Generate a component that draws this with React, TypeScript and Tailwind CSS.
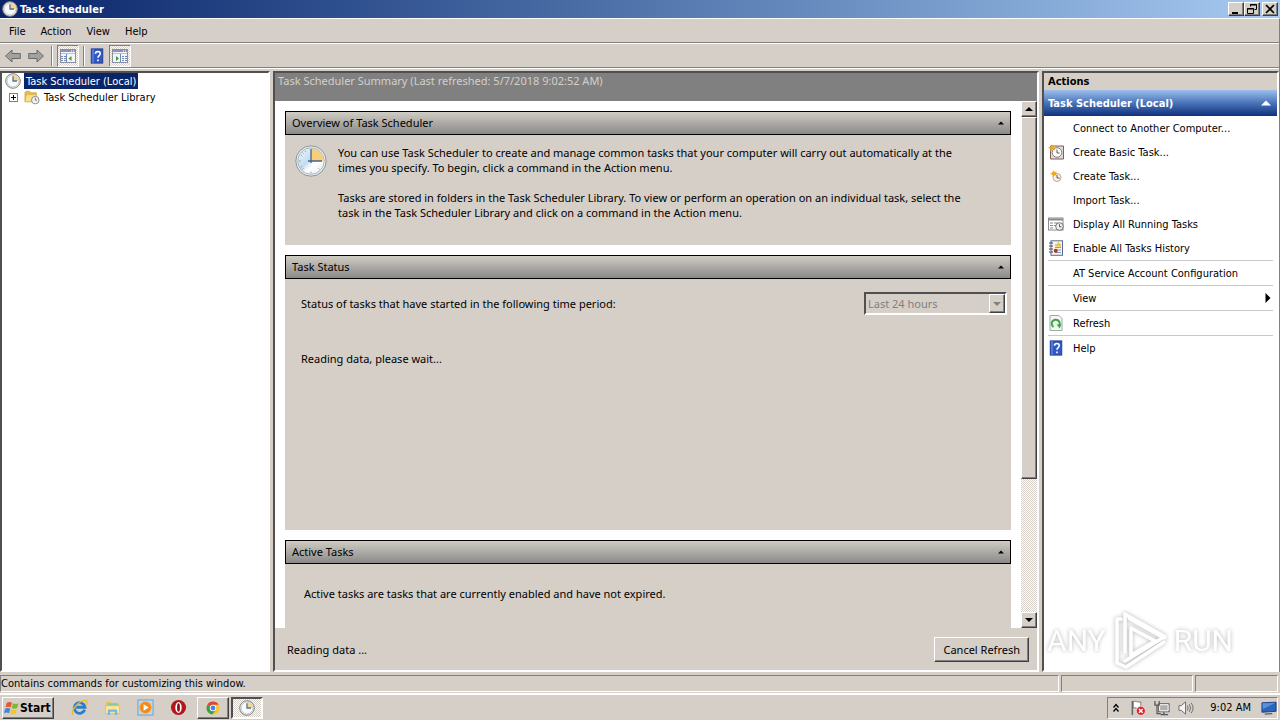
import type { ReactNode } from 'react'
import { clsx } from 'clsx'

const RAISED =
  'border border-t-white border-l-white border-r-[#404040] border-b-[#404040] bg-[#d5cfc8] shadow-[inset_-1px_-1px_0_#808080]'
const SUNKEN = 'border-2 border-t-[#505050] border-l-[#505050] border-r-white border-b-white'
const THIN_SUNKEN = 'border border-t-[#808080] border-l-[#808080] border-r-white border-b-white'
const DITHER = 'bg-[repeating-conic-gradient(#fff_0_25%,#d5cfc8_0_50%)] bg-[length:2px_2px]'

function ClockIcon({ className }: { className?: string }) {
  return (
    <svg viewBox="0 0 16 16" className={clsx('shrink-0', className)}>
      <circle cx="8" cy="8" r="7.3" fill="#e9e9e6" stroke="#86857f" strokeWidth="1" />
      <circle cx="8" cy="8" r="5.8" fill="#f7fafc" stroke="#b9bcc0" strokeWidth=".6" />
      <path d="M8 8V2.4A5.6 5.6 0 0 1 13.6 8Z" fill="#f5d68f" />
      <path d="M8 3.2V8h4" fill="none" stroke="#5b6f8c" strokeWidth="1.3" />
    </svg>
  )
}

function BigClockIcon() {
  return (
    <svg viewBox="0 0 32 32" className="h-8 w-8 shrink-0">
      <defs>
        <linearGradient id="face" x1="0" y1="0" x2="1" y2="1">
          <stop offset="0" stopColor="#f4f9fd" />
          <stop offset=".45" stopColor="#c4dcef" />
          <stop offset=".6" stopColor="#fff" />
          <stop offset="1" stopColor="#e4eef6" />
        </linearGradient>
      </defs>
      <circle cx="16" cy="16" r="15.2" fill="#eceeee" stroke="#8d9296" strokeWidth="1" />
      <circle cx="16" cy="16" r="13.2" fill="url(#face)" stroke="#98a6b2" strokeWidth=".8" />
      <path d="M16 16V3.4A12.6 12.6 0 0 1 28.6 16Z" fill="#f6cf7d" />
      <path
        d="M16 26.5v2M4 16h2M7.5 7.5l1.2 1.2M7.5 24.5l1.2-1.2M24.5 24.5l-1.2-1.2M10 5.8l.8 1.3M5.8 10l1.3.8M5.8 22l1.3-.8"
        stroke="#8fa9c2"
        strokeWidth="1"
      />
      <path d="M16 4v14M13 16h14" stroke="#4a6484" strokeWidth="1.3" />
    </svg>
  )
}

function FolderClockIcon() {
  return (
    <svg viewBox="0 0 17 16" className="h-4 w-4 shrink-0">
      <path d="M1 3.5 2 2h4l1.5 1.5H13V13H1z" fill="#e9bd4e" stroke="#c79a35" strokeWidth=".7" />
      <path d="M1 13 2.5 5.5h11L12.5 13z" fill="#fbe08a" stroke="#d3a842" strokeWidth=".6" />
      <circle cx="12" cy="11.3" r="4" fill="#f4f4f4" stroke="#7d7d7d" strokeWidth=".9" />
      <path d="M12 8.8v2.6h2" fill="none" stroke="#666" strokeWidth=".9" />
    </svg>
  )
}

function HelpIcon() {
  return (
    <svg viewBox="0 0 16 18" className="h-4 w-4 shrink-0">
      <rect x="1.5" y="1" width="13" height="16" fill="#3159c4" stroke="#1d3a93" />
      <path d="M3.5 1v16" stroke="#7d9cec" strokeWidth="1" />
      <path
        d="M6.3 6.5c0-3.4 5.4-3.4 5.4-.2 0 2.3-2.6 2.3-2.6 4.7M9.1 12.8v2"
        fill="none"
        stroke="#fff"
        strokeWidth="1.8"
      />
    </svg>
  )
}

function PaneIcon({ mirrored }: { mirrored?: boolean }) {
  return (
    <svg viewBox="0 0 16 14" className="h-3.5 w-4 shrink-0">
      <rect x=".5" y=".5" width="15" height="13" fill="#f4f5f8" stroke="#8a8fa2" />
      <path d="M1 2h14" stroke="#8794b5" strokeWidth="2" />
      <path d="M1 4.5h14" stroke="#b9c0d4" />
      <path d="M11 2h1M13 2h1" stroke="#fff" />
      <path
        d={
          mirrored
            ? 'M8.500 5v8M10 7.500h2M10 9.500h2M10 11.500h2M13 7.500h2M13 9.500h2M13 11.500h2'
            : 'M6.500 5v8M1 7.500h2M1 9.500h2M1 11.500h2M4 7.500h2M4 9.500h2M4 11.500h2'
        }
        stroke="#7286b4"
      />
      <path d={mirrored ? 'M4 7v5l3-2.500z' : 'M11.500 7v5l-3-2.500z'} fill="#3e9a3e" />
    </svg>
  )
}

function ArrowIcon({ forward }: { forward?: boolean }) {
  return (
    <svg viewBox="0 0 16 14" className="h-4 w-4">
      <path
        d={forward ? 'M15.500 7 9 1v3.500H.7v5H9V13z' : 'M.5 7 7 1v3.500h8.300v5H7V13z'}
        fill="#a3a19e"
        stroke="#6a6a6a"
        strokeWidth="1"
      />
    </svg>
  )
}

function BasicTaskIcon() {
  return (
    <svg viewBox="0 0 16 16" className="h-4 w-4">
      <path d="M2.500 2h13v13h-13z" fill="#e2dcda" stroke="#7a5f5a" />
      <circle cx="9" cy="8.500" r="4.800" fill="#fff" stroke="#8a7a76" />
      <path d="M9 5.500V9h2.600" fill="none" stroke="#5b5b5b" />
      <path d="m4 0 1 2.600L8 2 6 4l1.500 2.400L4.500 5.600 2.500 8l-.2-3L0 3.600l2.700-.8z" fill="#f2a91e" />
    </svg>
  )
}

function CreateTaskIcon() {
  return (
    <svg viewBox="0 0 16 16" className="h-4 w-4">
      <circle cx="9" cy="9.500" r="4" fill="#f4f0ea" stroke="#b9ab9a" />
      <path d="M9 7v3h2.600" fill="none" stroke="#5e5850" />
      <path d="m5.500 2 1 2.200L9 3.600 7.700 5.600l1.300 2-2.600-.4-1.600 2-.4-2.500L2 5.500l2.600-.8z" fill="#f2a91e" />
      <circle cx="5.800" cy="5.400" r="2" fill="#f2a91e" />
    </svg>
  )
}

function RunningTasksIcon() {
  return (
    <svg viewBox="0 0 16 16" className="h-4 w-4">
      <rect x=".5" y="2" width="14.500" height="12" fill="#fff" stroke="#8b8b8b" />
      <path d="M1 3.500h14" stroke="#8b8b8b" strokeWidth="2" />
      <path d="M2 7h3M6 7h4M2 9.500h3M6 9.500h2M2 12h3" stroke="#888" />
      <circle cx="11.500" cy="10.500" r="3.800" fill="#f1f1f1" stroke="#747474" />
      <path d="M11.500 8.200v2.600h2" fill="none" stroke="#555" />
    </svg>
  )
}

function HistoryIcon() {
  return (
    <svg viewBox="0 0 16 16" className="h-4 w-4">
      <rect x="3" y=".8" width="11.500" height="14.500" fill="#f7f4e4" stroke="#596aa0" />
      <path d="M1 3h4M1 6h4M1 9h4M1 12h4" stroke="#48485a" />
      <path d="M7 5h6M7 7.500h6M7 10h6M7 12.500h6" stroke="#8c9ac4" />
      <path d="m10.500 1.500 3 5h-6z" fill="#f0c437" />
      <circle cx="7.700" cy="10.700" r="2" fill="#b5322e" />
    </svg>
  )
}

function RefreshIcon() {
  return (
    <svg viewBox="0 0 16 16" className="h-4 w-4">
      <path d="M2 .5h9l3 3v12H2z" fill="#f2f8f1" stroke="#9cab9b" />
      <path d="M5.500 12A4 4 0 1 1 11 11" fill="none" stroke="#3fa14a" strokeWidth="2" />
      <path d="m8.500 9.500 4.800-.2-1.500 4.300z" fill="#3fa14a" />
    </svg>
  )
}

function Triangle({ dir, className }: { dir: 'up' | 'down' | 'right'; className?: string }) {
  const d = { up: 'M0 6 4 2l4 4z', down: 'M0 2h8L4 6z', right: 'M2 0v8l4-4z' }[dir]
  return (
    <svg viewBox="0 0 8 8" className={clsx('shrink-0', className)}>
      <path d={d} fill="currentColor" />
    </svg>
  )
}

function TitleBar() {
  const button = clsx(RAISED, 'flex h-3.5 w-4 items-center justify-center')
  return (
    <header className="flex h-[18px] shrink-0 items-center bg-linear-to-r from-[#0a246a] to-[#a6caf0] px-0.5 text-white">
      <ClockIcon className="mr-0.5 h-4 w-4" />
      <h1 className="flex-1 font-bold">Task Scheduler</h1>
      <button className={button} aria-label="Minimize">
        <svg viewBox="0 0 12 12" className="h-3 w-3">
          <path d="M2 10h6" stroke="#000" strokeWidth="2" />
        </svg>
      </button>
      <button className={button} aria-label="Restore">
        <svg viewBox="0 0 12 12" className="h-3 w-3" fill="none" stroke="#000">
          <path d="M4.500 3.500v-2h6v5h-2M4 2h7M1.500 5.500h6v5h-6zM1 6h7" />
        </svg>
      </button>
      <button className={clsx(button, 'ml-0.5')} aria-label="Close">
        <svg viewBox="0 0 12 12" className="h-3 w-3">
          <path d="m2 2 8 8M10 2l-8 8" stroke="#000" strokeWidth="1.700" />
        </svg>
      </button>
    </header>
  )
}

function MenuBar() {
  return (
    <nav className="flex h-6 shrink-0 items-center gap-[15px] border-b border-[#808080] px-[9px] pt-0.5">
      {['File', 'Action', 'View', 'Help'].map((item) => (
        <button key={item}>{item}</button>
      ))}
    </nav>
  )
}

function Toolbar() {
  const pressed = clsx(THIN_SUNKEN, DITHER, 'flex h-[22px] w-[22px] items-center justify-center')
  const divider = 'h-5 w-0.5 border-l border-[#808080] bg-white'
  return (
    <div className="flex h-[25px] shrink-0 items-center border-t border-b border-t-white border-b-[#808080] px-[5px]">
      <button aria-label="Back">
        <ArrowIcon />
      </button>
      <button aria-label="Forward" className="ml-[7px]">
        <ArrowIcon forward />
      </button>
      <div className={clsx(divider, 'mr-1 ml-[7px]')} />
      <button className={pressed} aria-label="Show/Hide Console Tree">
        <PaneIcon />
      </button>
      <div className={clsx(divider, 'mx-1')} />
      <button aria-label="Help" className="mr-1">
        <HelpIcon />
      </button>
      <button className={pressed} aria-label="Show/Hide Action Pane">
        <PaneIcon mirrored />
      </button>
    </div>
  )
}

function TreePane() {
  return (
    <aside className={clsx(SUNKEN, 'w-[270px] shrink-0 bg-white')}>
      <div className="flex h-4 items-center pl-[3px]">
        <ClockIcon className="mr-[3px] h-4 w-4" />
        <button className="h-4 bg-[#0a246a] px-0.5 text-white">Task Scheduler (Local)</button>
      </div>
      <div className="flex h-4 items-center pl-[7px]">
        <button
          aria-label="Expand"
          className="mr-1.5 flex h-[9px] w-[9px] items-center justify-center border border-[#808080]"
        >
          <svg viewBox="0 0 5 5" className="h-[5px] w-[5px]">
            <path d="M0 2.500h5M2.500 0v5" stroke="#000" />
          </svg>
        </button>
        <FolderClockIcon />
        <button className="ml-1">Task Scheduler Library</button>
      </div>
    </aside>
  )
}

function Section({ title, className, children }: { title: string; className?: string; children: ReactNode }) {
  return (
    <section className="shrink-0">
      <button className="flex h-6 w-full items-center justify-between border border-black bg-linear-to-b from-[#cfccc4] to-[#8c8a88] px-1.5">
        <h2 className="pb-0.5">{title}</h2>
        <Triangle dir="up" className="h-1.5 w-1.5" />
      </button>
      <div className={clsx('bg-[#d5cfc8]', className)}>{children}</div>
    </section>
  )
}

function Scrollbar() {
  const arrow = clsx(RAISED, 'flex h-4 shrink-0 items-center justify-center')
  return (
    <div className={clsx(DITHER, 'flex w-4 shrink-0 flex-col')}>
      <button className={arrow} aria-label="Scroll up">
        <Triangle dir="up" className="h-2 w-2" />
      </button>
      <div className={clsx(RAISED, 'grow-[73]')} />
      <div className="grow-[27]" />
      <button className={arrow} aria-label="Scroll down">
        <Triangle dir="down" className="h-2 w-2" />
      </button>
    </div>
  )
}

function SummaryPane() {
  return (
    <main
      className={clsx(
        SUNKEN,
        'ml-[3px] flex min-w-0 flex-1 flex-col bg-[#d5cfc8] font-["Noto_Sans","Open_Sans",sans-serif] leading-[15px]',
      )}
    >
      <div className="h-7 shrink-0 bg-[#808080] px-[3px] text-[#d5cfc8]">
        Task Scheduler Summary (Last refreshed: 5/7/2018 9:02:52 AM)
      </div>
      <div className="flex min-h-0 flex-1 bg-white">
        <div className="flex min-w-0 flex-1 flex-col gap-2.5 overflow-hidden p-2.5 pb-0">
          <Section title="Overview of Task Scheduler" className="flex h-[110px] gap-[11px] px-2.5 py-2.5">
            <BigClockIcon />
            <div className="max-w-[640px]">
              <p className="mb-[15px]">
                You can use Task Scheduler to create and manage common tasks that your computer will carry out
                automatically at the times you specify. To begin, click a command in the Action menu.
              </p>
              <p>
                Tasks are stored in folders in the Task Scheduler Library. To view or perform an operation on an
                individual task, select the task in the Task Scheduler Library and click on a command in the Action
                menu.
              </p>
            </div>
          </Section>
          <Section title="Task Status" className="h-[251px] py-[13px] pr-1 pl-4">
            <div className="flex items-center justify-between">
              <label htmlFor="period">Status of tasks that have started in the following time period:</label>
              <div className="relative">
                <select
                  id="period"
                  disabled
                  className={clsx(SUNKEN, 'block h-[23px] w-[143px] appearance-none pl-0.5 text-[#808080]')}
                >
                  <option>Last 24 hours</option>
                </select>
                <span
                  className={clsx(
                    RAISED,
                    'pointer-events-none absolute top-0.5 right-0.5 bottom-0.5 flex w-4 items-center justify-center text-[#808080]',
                  )}
                >
                  <Triangle dir="down" className="h-2 w-2" />
                </span>
              </div>
            </div>
            <p className="mt-9">Reading data, please wait...</p>
          </Section>
          <Section title="Active Tasks" className="h-[200px] px-[19px] py-[22px]">
            <p>Active tasks are tasks that are currently enabled and have not expired.</p>
          </Section>
        </div>
        <Scrollbar />
      </div>
      <footer className="flex h-[42px] shrink-0 items-center justify-between pr-2 pl-3">
        <span>Reading data ...</span>
        <button className={clsx(RAISED, 'h-[25px] px-2')}>Cancel Refresh</button>
      </footer>
    </main>
  )
}

type Action = { label: string; icon?: ReactNode; divided?: boolean; submenu?: boolean }

const ACTIONS: Action[] = [
  { label: 'Connect to Another Computer...' },
  { label: 'Create Basic Task...', icon: <BasicTaskIcon /> },
  { label: 'Create Task...', icon: <CreateTaskIcon /> },
  { label: 'Import Task...' },
  { label: 'Display All Running Tasks', icon: <RunningTasksIcon /> },
  { label: 'Enable All Tasks History', icon: <HistoryIcon /> },
  { label: 'AT Service Account Configuration', divided: true },
  { label: 'View', divided: true, submenu: true },
  { label: 'Refresh', icon: <RefreshIcon />, divided: true },
  { label: 'Help', icon: <HelpIcon />, divided: true },
]

function Watermark() {
  return (
    <div className="pointer-events-none absolute right-11 bottom-0 flex h-[60px] items-center gap-1.5 font-[Roboto,sans-serif] text-[30px] text-white drop-shadow-[0_0_2px_#b4b4b4]">
      <span>ANY</span>
      <svg
        viewBox="0 0 56 60"
        className="h-[60px] w-14"
        fill="none"
        stroke="#fff"
        strokeWidth="3.500"
        strokeLinejoin="round"
        strokeLinecap="round"
      >
        <path d="M13 4v38M13 4l39 23-39 24" />
        <path d="M19 18l24 13-24 14V18" />
        <path d="M9 9H5v44l9 4 38-25" />
        <path d="M18 8l34 19" strokeWidth="5" />
      </svg>
      <span>RUN</span>
    </div>
  )
}

function ActionsPane() {
  return (
    <aside className={clsx(SUNKEN, 'relative ml-[3px] w-[237px] shrink-0 bg-white')}>
      <div className="flex h-[17px] items-center bg-[#d5cfc8] px-1 font-bold">Actions</div>
      <button className="flex h-[26px] w-full items-center justify-between bg-linear-to-b from-[#9dbfec] via-[#4a74b8] to-[#12307c] pr-1.5 pl-1 font-bold text-white">
        Task Scheduler (Local)
        <Triangle dir="up" className="h-2.5 w-2.5" />
      </button>
      <ul className="px-1">
        {ACTIONS.map((action) => (
          <li key={action.label} className={clsx(action.divided && 'border-t border-[#c8c8c8]')}>
            <button className="flex h-6 w-full items-center text-left">
              <span className="flex w-[25px] items-center">{action.icon}</span>
              <span className="flex-1">{action.label}</span>
              {action.submenu && <Triangle dir="right" className="h-2.5 w-2.5" />}
            </button>
          </li>
        ))}
      </ul>
      <Watermark />
    </aside>
  )
}

function StatusBar() {
  return (
    <div className="mt-0.5 flex h-5 shrink-0 gap-0.5 border-b border-white py-px">
      <div className={clsx(THIN_SUNKEN, 'flex flex-1 items-center')}>Contains commands for customizing this window.</div>
      <div className={clsx(THIN_SUNKEN, 'w-[132px]')} />
      <div className={clsx(THIN_SUNKEN, 'mr-0.5 w-[83px]')} />
    </div>
  )
}

function QuickLaunch() {
  return (
    <div className="ml-[17px] flex items-center gap-4">
      <a href="#ie" aria-label="Internet Explorer">
        <svg viewBox="0 0 18 18" className="h-[17px] w-[17px]">
          <path d="M14.500 11.500a5.700 5.700 0 1 1 .3-2.800H5.500" fill="none" stroke="#2a7fcc" strokeWidth="3" />
          <path d="M2 16.500C-1 12 11-1 16.500 2c1 1 .2 3-.8 4.500" fill="none" stroke="#edb92e" strokeWidth="1.400" />
        </svg>
      </a>
      <a href="#explorer" aria-label="Windows Explorer">
        <svg viewBox="0 0 18 18" className="h-[17px] w-[17px]">
          <path d="M2 3h5l1.500 2H16v11H2z" fill="#e9c45c" />
          <path d="M4 4.500h11v4H4z" fill="#8cc6a0" />
          <path d="M1.500 7h15v8.500h-15z" fill="#fbe79c" stroke="#dcb850" strokeWidth=".7" />
          <path d="M4 17v-4.500q0-1.500 1.500-1.500h7q1.500 0 1.500 1.500V17h-2.500v-3.500h-5V17z" fill="#76b7e4" />
        </svg>
      </a>
      <a href="#player" aria-label="Windows Media Player">
        <svg viewBox="0 0 18 18" className="h-[17px] w-[17px]">
          <rect x="1" y="1" width="16" height="16" fill="#b9d9f2" stroke="#6c9fcd" />
          <circle cx="9" cy="9" r="6.300" fill="#f08a1c" stroke="#fbb65f" />
          <path d="m7 5.500 5.500 3.500L7 12.500z" fill="#fff" />
        </svg>
      </a>
      <a href="#opera" aria-label="Opera">
        <svg viewBox="0 0 18 18" className="h-[17px] w-[17px]">
          <circle cx="9" cy="9" r="8" fill="#b5161e" />
          <ellipse cx="9" cy="9" rx="3.400" ry="5.800" fill="#fff" />
          <ellipse cx="9" cy="9" rx="1.500" ry="4.600" fill="#8e0c14" />
        </svg>
      </a>
    </div>
  )
}

function Tray() {
  return (
    <div className={clsx(THIN_SUNKEN, 'ml-auto flex h-[22px] items-center pl-1')}>
      <button aria-label="Show hidden icons">
        <svg viewBox="0 0 8 10" className="h-2.5 w-2" fill="none" stroke="#000" strokeWidth="1.300">
          <path d="m1.500 4.500 2.500-3 2.500 3M1.500 8.500l2.500-3 2.500 3" />
        </svg>
      </button>
      <svg viewBox="0 0 17 17" className="ml-2.5 h-4 w-4">
        <path d="M2.500 1v15" stroke="#666" strokeWidth="1.600" />
        <path d="M3.500 1.500c3-1 4 1.500 8 .5v7c-4 1-5-1.500-8-.5z" fill="#fff" stroke="#777" />
        <circle cx="11.500" cy="11.500" r="4.800" fill="#d8242c" stroke="#fff" strokeWidth=".6" />
        <path d="m9.500 9.500 4 4M13.500 9.500l-4 4" stroke="#fff" strokeWidth="1.500" />
      </svg>
      <svg viewBox="0 0 17 17" className="ml-2 h-4 w-4">
        <rect x="5" y="4" width="11" height="8.500" fill="#b0b0b0" stroke="#555" />
        <path d="M6 5h9v6.500H6z" fill="none" stroke="#fff" />
        <path d="M7 15.500h8M10.500 13v2" stroke="#555" strokeWidth="1.500" />
        <path d="M1 1v4.500h4.500V1M3.200 5.500v9h4" fill="none" stroke="#555" strokeWidth="1.300" />
      </svg>
      <svg viewBox="0 0 17 17" className="ml-2 h-4 w-4" fill="none" stroke="#6b6b6b">
        <path d="M1 6h2.500L8 2v13l-4.500-4H1z" fill="#f4f4f4" />
        <path d="M10 6q1.500 2.500 0 5M12 4.500q2.800 4 0 8M14 3q4 5.500 0 11" />
      </svg>
      <span className="ml-4">9:02 AM</span>
      <svg viewBox="0 0 17 14" className="ml-2.5 h-3.5 w-4">
        <path d="M1 1.500 16 .8v9.700L1 11.500z" fill="#2b66bd" stroke="#173e86" />
        <path d="M1.500 2 15 1.500 2 8z" fill="#5b92dc" />
        <path d="M4 13.500 12 13" stroke="#333" />
      </svg>
    </div>
  )
}

function Taskbar() {
  return (
    <div className="flex h-[26px] shrink-0 items-center border-t border-white px-0.5">
      <button className={clsx(RAISED, 'flex h-[22px] w-[52px] items-center px-px text-xs font-bold')}>
        <svg viewBox="0 0 17 16" className="h-4 w-4 shrink-0">
          <path d="M3 2.500q2.800-1.800 5.500 0L7 7.500q-2.500-1.500-5.500 0z" fill="#e8562a" />
          <path d="M9.500 3q3 1.600 6 0L14 8q-2.800 1.500-6 0z" fill="#7cb83a" />
          <path d="M1.200 8.700q2.800-1.600 5.500 0L5.300 13.500q-2.600-1.500-5.300 0z" fill="#3d86d8" />
          <path d="M7.700 9.200q3 1.500 6 0L12.300 14q-3 1.500-6 0z" fill="#f5c52c" />
        </svg>
        Start
      </button>
      <QuickLaunch />
      <button
        aria-label="Google Chrome"
        className={clsx(RAISED, 'ml-2.5 flex h-[22px] w-8 items-center justify-center')}
      >
        <svg viewBox="0 0 16 16" className="h-4 w-4">
          <circle cx="8" cy="8" r="6.500" fill="#f4c628" />
          <path d="M8 8 2.400 4.700A6.500 6.500 0 0 1 13.600 4.700H8z" fill="#dc4537" />
          <path d="M8 8 2.400 4.700A6.500 6.500 0 0 0 7.200 14.500L11 9.700z" fill="#3a9e50" />
          <circle cx="8" cy="8" r="3.200" fill="#fff" />
          <circle cx="8" cy="8" r="2.400" fill="#4285e8" />
        </svg>
      </button>
      <button
        aria-label="Task Scheduler"
        className={clsx(SUNKEN, DITHER, 'ml-0.5 flex h-[22px] w-8 items-center justify-center')}
      >
        <ClockIcon className="h-4 w-4" />
      </button>
      <Tray />
    </div>
  )
}

export default function App() {
  return (
    <div className='flex h-screen flex-col overflow-hidden bg-[#d5cfc8] font-["DejaVu_Sans_Condensed","DejaVu_Sans",sans-serif] text-[11px] leading-[15px] text-black'>
      <TitleBar />
      <div className="flex min-h-0 flex-1 flex-col border-t border-r border-t-white border-r-[#808080]">
        <MenuBar />
        <Toolbar />
        <div className="flex min-h-0 flex-1 border-t border-white pt-0.5">
          <TreePane />
          <SummaryPane />
          <ActionsPane />
        </div>
      </div>
      <StatusBar />
      <Taskbar />
    </div>
  )
}
